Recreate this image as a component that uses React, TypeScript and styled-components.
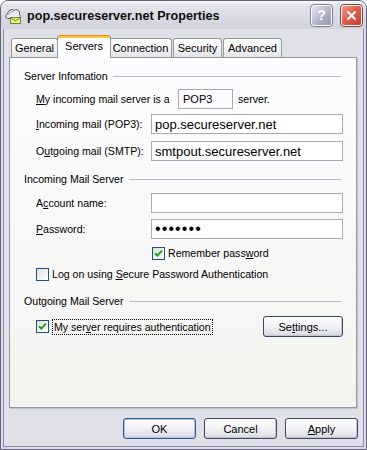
import React from 'react'
import styled, { createGlobalStyle } from 'styled-components'

const GlobalStyle = createGlobalStyle`
  html, body {
    margin: 0;
    padding: 0;
    background: #ffffff;
  }
  body {
    font-family: 'Liberation Sans', Arial, sans-serif;
    font-size: 10.6px;
    color: #000;
  }
`

const Window = styled.div`
  width: 367px;
  height: 450px;
  box-sizing: border-box;
  display: flex;
  flex-direction: column;
  border: 1px solid #62627e;
  border-radius: 8px 8px 0 0;
  background: #e0e0e8;
  overflow: hidden;
`

const TitleBar = styled.div`
  height: 28px;
  flex: none;
  display: flex;
  align-items: center;
  gap: 6px;
  padding: 0 4px;
  background: linear-gradient(#fbfbfd 0, #e6e6ee 3px, #dadbe4 50%, #d2d2de 100%);
`

const TitleText = styled.div`
  flex: 1;
  font-family: 'Liberation Sans', Arial, sans-serif;
  font-weight: bold;
  font-size: 12.6px;
  color: #101010;
  padding-top: 1px;
`

const CaptionButton = styled.div<{ $close?: boolean }>`
  width: 21px;
  height: 21px;
  box-sizing: border-box;
  border: 1px solid #ffffff;
  outline: 1px solid ${p => (p.$close ? '#9c3b30' : '#7d7f98')};
  border-radius: 3px;
  margin-left: ${p => (p.$close ? '3px' : '0')};
  display: flex;
  align-items: center;
  justify-content: center;
  color: #ffffff;
  font-weight: bold;
  font-size: 14px;
  background: ${p =>
    p.$close
      ? 'linear-gradient(135deg, #f29a89 0%, #e0604d 45%, #c8412f 100%)'
      : 'linear-gradient(135deg, #e6e7f0 0%, #b6b8cc 50%, #9597b2 100%)'};
`

const Frame = styled.div`
  flex: 1;
  display: flex;
  flex-direction: column;
  border: 2px solid #dcdce6;
  border-top: none;
  box-shadow: inset 1px 0 #8a8aa6, inset -1px 0 #8a8aa6, inset 0 -1px #8a8aa6;
  padding: 0 1px 1px 1px;
`

const TabRow = styled.div`
  height: 28px;
  flex: none;
  display: flex;
  align-items: flex-end;
  padding-left: 7px;
`

const Tab = styled.div<{ $w: number; $active?: boolean }>`
  position: relative;
  z-index: ${p => (p.$active ? 2 : 1)};
  width: ${p => (p.$active ? p.$w + 4 : p.$w - 1)}px;
  height: ${p => (p.$active ? 23 : 19)}px;
  margin: ${p => (p.$active ? '0 -2px -1px -2px' : '0 1px 0 0')};
  box-sizing: border-box;
  display: flex;
  align-items: center;
  justify-content: center;
  font-size: 11px;
  border: 1px solid #919b9c;
  border-bottom: none;
  border-top-color: ${p => (p.$active ? '#e68b2c' : '#919b9c')};
  border-radius: 3px 3px 0 0;
  box-shadow: ${p => (p.$active ? 'inset 0 2px #ffc83c' : 'none')};
  background: ${p =>
    p.$active ? '#fcfcfe' : 'linear-gradient(#ffffff 0%, #f4f4f6 55%, #e3e3ea 100%)'};
  padding-bottom: ${p => (p.$active ? 2 : 0)}px;
`

const Panel = styled.div`
  height: 351px;
  flex: none;
  box-sizing: border-box;
  margin: 0 6px 0 5px;
  border: 1px solid #919b9c;
  box-shadow: 1px 1px 0 #c2c4cc;
  background: linear-gradient(#fcfcfe 0%, #f8f8f8 50%, #f3f3ef 100%);
  display: flex;
  flex-direction: column;
  padding: 0 13px 0 14px;
`

const GroupHeader = styled.div<{ $top: number }>`
  margin-top: ${p => p.$top}px;
  height: 14px;
  display: flex;
  align-items: center;
  gap: 5px;
  margin-right: 2px;
`

const GroupLine = styled.div`
  flex: 1;
  height: 1px;
  margin-top: 1px;
  background: #bcbcc8;
`

const Row = styled.div<{ $top: number; $h: number; $indent?: number }>`
  margin-top: ${p => p.$top}px;
  height: ${p => p.$h}px;
  display: flex;
  align-items: center;
  padding-left: ${p => 12 + (p.$indent ?? 0)}px;
`

const Label = styled.div<{ $w?: number }>`
  width: ${p => (p.$w ? `${p.$w}px` : 'auto')};
  flex: none;
  white-space: nowrap;
`

const EditBox = styled.div<{ $w?: number; $plain?: boolean; $dots?: boolean }>`
  ${p => (p.$w ? `width: ${p.$w}px; flex: none;` : 'flex: 1;')}
  height: 20px;
  box-sizing: border-box;
  border: 1px solid #a5acb5;
  background: ${p => (p.$plain ? 'transparent' : '#ffffff')};
  display: flex;
  align-items: center;
  padding-left: ${p => (p.$plain ? 4 : 3)}px;
  font-size: ${p => (p.$plain ? 11 : p.$dots ? 16 : 13)}px;
  letter-spacing: ${p => (p.$dots ? '1.1px' : 'normal')};
  white-space: nowrap;
  overflow: hidden;
`

const Suffix = styled.div`
  margin-left: 5px;
`

const CheckWrap = styled.div`
  display: flex;
  align-items: center;
  gap: 3px;
`

const CheckBox = styled.div`
  width: 13px;
  height: 13px;
  box-sizing: border-box;
  border: 1px solid #1c5180;
  background: linear-gradient(135deg, #dcdcd7 0%, #f4f4f0 60%, #ffffff 100%);
  display: flex;
  align-items: center;
  justify-content: center;
`

const FocusText = styled.span`
  border: 1px dotted #000;
  padding: 1px 1px;
`

const Spacer = styled.div`
  flex: 1;
`

const Button = styled.div<{ $w?: number; $default?: boolean }>`
  width: ${p => p.$w ?? 73}px;
  height: 21px;
  box-sizing: border-box;
  flex: none;
  display: flex;
  align-items: center;
  justify-content: center;
  font-size: 11px;
  border: 1px solid ${p => (p.$default ? '#2c5a96' : '#3c4664')};
  border-radius: 3px;
  background: linear-gradient(#ffffff 0%, #f3f3f7 45%, #e2e2ea 85%, #d2d2de 100%);
  box-shadow: ${p => (p.$default ? 'inset 0 0 0 1px #a9c1ec' : 'inset -1px -1px 0 #c4c4d2')};
`

const ButtonRow = styled.div`
  margin-top: 10px;
  display: flex;
  justify-content: flex-end;
  gap: 8px;
  padding-right: 5px;
`

function Check({ checked }: { checked?: boolean }) {
  return (
    <CheckBox>
      {checked && (
        <svg width="9" height="9" viewBox="0 0 9 9">
          <path d="M1 4.2 L3.4 6.6 L8 1.6" fill="none" stroke="#21a121" strokeWidth="2" />
        </svg>
      )}
    </CheckBox>
  )
}

function MailIcon() {
  return (
    <svg width="16" height="17" viewBox="0 0 16 17">
      <path
        d="M2.5 11.5 C0.2 11.5 0.2 7.5 2.6 7 C2.8 3.5 6.6 1.6 9.3 3.2 C11.8 1.8 15.2 3.6 14.4 7.2 C15.8 8.2 15.3 11.5 13.2 11.5 Z"
        fill="#ececf2"
        stroke="#55556a"
      />
      <path d="M3.5 8 C4 5 7 4 9 5" fill="none" stroke="#9aa0b4" />
      <rect x="5.5" y="10.5" width="10" height="6" fill="#f2ee70" stroke="#6a8a3a" />
      <path d="M5.5 10.5 L10.5 14 L15.5 10.5" fill="none" stroke="#6a8a3a" />
    </svg>
  )
}

const tabs = [
  { label: 'General', w: 48 },
  { label: 'Servers', w: 50, active: true },
  { label: 'Connection', w: 64 },
  { label: 'Security', w: 50 },
  { label: 'Advanced', w: 60 }
]

export default function App() {
  return (
    <>
      <GlobalStyle />
      <Window>
        <TitleBar>
          <MailIcon />
          <TitleText>pop.secureserver.net Properties</TitleText>
          <CaptionButton>?</CaptionButton>
          <CaptionButton $close>
            <svg width="11" height="11" viewBox="0 0 11 11">
              <path d="M1.5 1.5 L9.5 9.5 M9.5 1.5 L1.5 9.5" stroke="#ffffff" strokeWidth="2" />
            </svg>
          </CaptionButton>
        </TitleBar>
        <Frame>
          <TabRow>
            {tabs.map(t => (
              <Tab key={t.label} $w={t.w} $active={t.active}>
                {t.label}
              </Tab>
            ))}
          </TabRow>
          <Panel>
            <GroupHeader $top={11}>
              <span>Server Infomation</span>
              <GroupLine />
            </GroupHeader>
            <Row $top={6} $h={20}>
              <Label $w={142}>
                <u>M</u>y incoming mail server is a
              </Label>
              <EditBox $w={55} $plain>
                POP3
              </EditBox>
              <Suffix>server.</Suffix>
            </Row>
            <Row $top={5} $h={20}>
              <Label $w={115}>
                <u>I</u>ncoming mail (POP3):
              </Label>
              <EditBox>pop.secureserver.net</EditBox>
            </Row>
            <Row $top={7} $h={20}>
              <Label $w={115}>
                O<u>u</u>tgoing mail (SMTP):
              </Label>
              <EditBox>smtpout.secureserver.net</EditBox>
            </Row>

            <GroupHeader $top={11}>
              <span>Incoming Mail Server</span>
              <GroupLine />
            </GroupHeader>
            <Row $top={7} $h={20}>
              <Label $w={115}>
                A<u>c</u>count name:
              </Label>
              <EditBox />
            </Row>
            <Row $top={6} $h={20}>
              <Label $w={115}>
                <u>P</u>assword:
              </Label>
              <EditBox $dots>•••••••</EditBox>
            </Row>
            <Row $top={7} $h={14} $indent={116}>
              <CheckWrap>
                <Check checked />
                <span>
                  Remember pass<u>w</u>ord
                </span>
              </CheckWrap>
            </Row>
            <Row $top={7} $h={14}>
              <CheckWrap>
                <Check />
                <span>
                  Log on using <u>S</u>ecure Password Authentication
                </span>
              </CheckWrap>
            </Row>

            <GroupHeader $top={13}>
              <span>Outgoing Mail Server</span>
              <GroupLine />
            </GroupHeader>
            <Row $top={8} $h={21}>
              <CheckWrap>
                <Check checked />
                <FocusText>
                  My ser<u>v</u>er requires authentication
                </FocusText>
              </CheckWrap>
              <Spacer />
              <Button $w={80}>
                Se<u>t</u>tings...
              </Button>
            </Row>
          </Panel>
          <ButtonRow>
            <Button $default>OK</Button>
            <Button>Cancel</Button>
            <Button>
              <u>A</u>pply
            </Button>
          </ButtonRow>
        </Frame>
      </Window>
    </>
  )
}
